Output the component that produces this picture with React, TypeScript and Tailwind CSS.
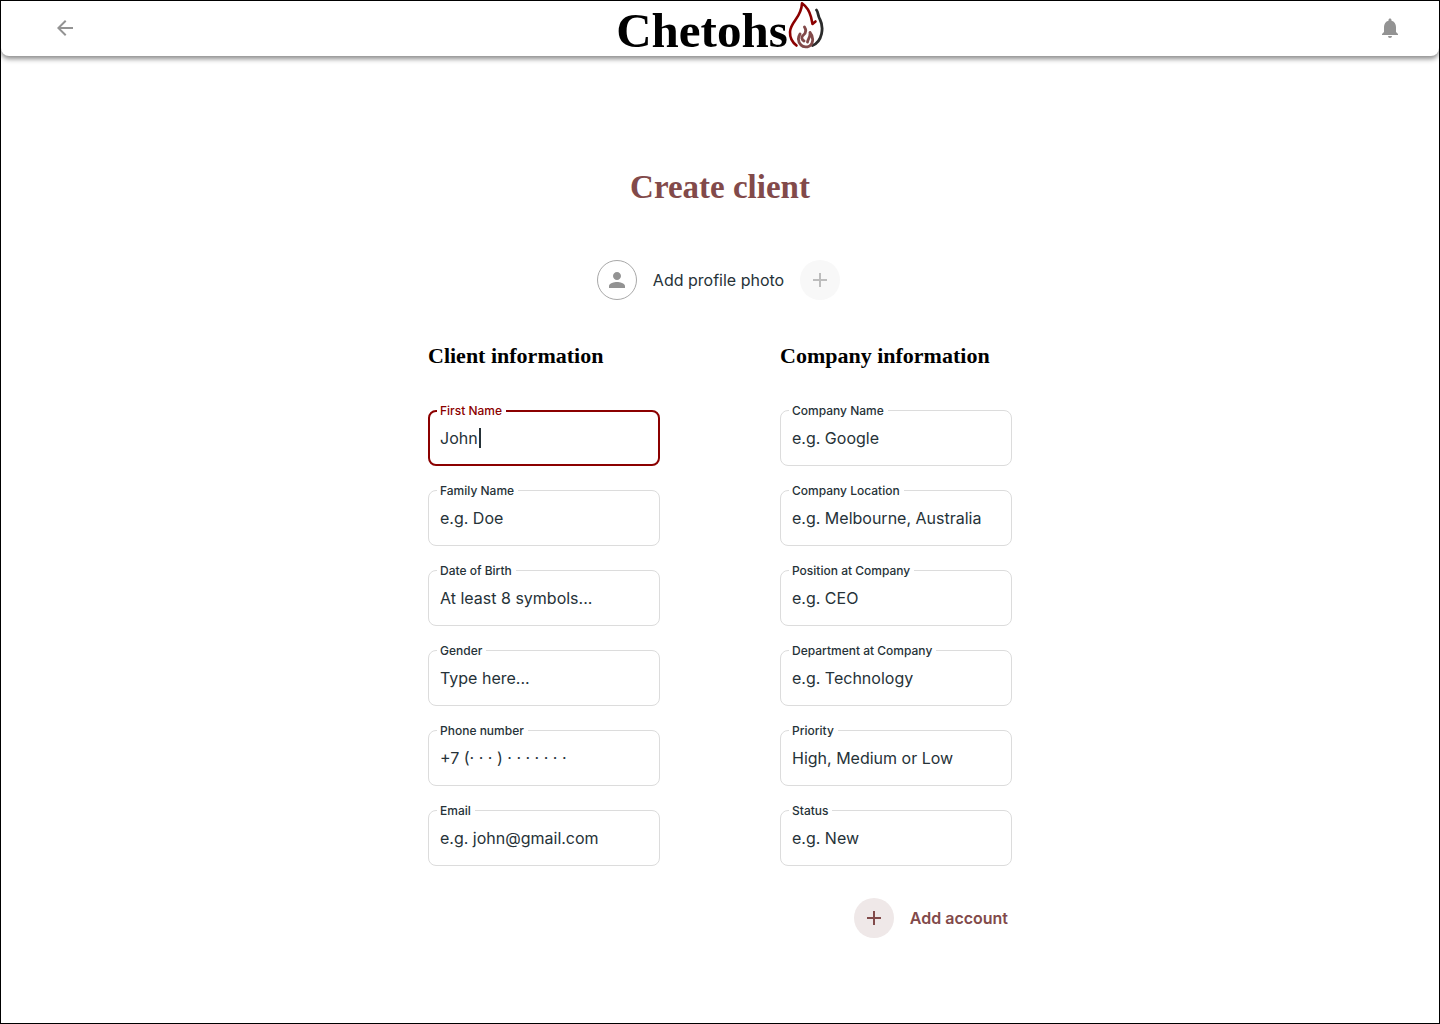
import { useState } from "react";
import { MdAdd, MdArrowBack, MdNotifications, MdPerson } from "react-icons/md";

type FieldProps = {
  id: string;
  label: string;
  placeholder: string;
  type?: string;
};

const clientFields: FieldProps[] = [
  { id: "family-name", label: "Family Name", placeholder: "e.g. Doe" },
  { id: "birth-date", label: "Date of Birth", placeholder: "At least 8 symbols..." },
  { id: "gender", label: "Gender", placeholder: "Type here..." },
  { id: "phone", label: "Phone number", placeholder: "+7 (· · · ) · · · · · · ·", type: "tel" },
  { id: "email", label: "Email", placeholder: "e.g. john@gmail.com", type: "email" },
];

const companyFields: FieldProps[] = [
  { id: "company-name", label: "Company Name", placeholder: "e.g. Google" },
  { id: "company-location", label: "Company Location", placeholder: "e.g. Melbourne, Australia" },
  { id: "position", label: "Position at Company", placeholder: "e.g. CEO" },
  { id: "department", label: "Department at Company", placeholder: "e.g. Technology" },
  { id: "priority", label: "Priority", placeholder: "High, Medium or Low" },
  { id: "status", label: "Status", placeholder: "e.g. New" },
];

function FlameLogo() {
  return (
    <svg viewBox="0 0 36 48" className="h-12 w-9" fill="none" strokeLinecap="round" strokeLinejoin="round" aria-hidden="true">
      <path
        d="M8.500 44.500C4 41 1.800 36.500 2 31C2.500 20.500 13.500 17 14 2.200C18.500 5.500 21.500 10 23 16L24.500 23L27.500 20.500"
        stroke="#8b0000"
        strokeWidth="2.600"
      />
      <path d="M28.500 9C30.500 11.500 29.500 14 32 18.500C36 26.500 34.500 40.500 24.500 44.500" stroke="#2b2b2b" strokeWidth="2.800" />
      <path
        d="M16.500 26C19 30 17.500 32.500 15 34.500C13 36.200 13.800 38.500 16 40M12 33C9.500 37 9.800 40.500 13 44M22 31.500C26.500 37 25 44.500 19.500 45.800C16.500 46.300 14 45.200 13 44M22 31.500C22.500 36.500 20 37.500 19.500 41"
        stroke="#824a4a"
        strokeWidth="2.800"
      />
    </svg>
  );
}

function Field({ id, label, placeholder, type = "text" }: FieldProps) {
  return (
    <div className="relative h-14 rounded-lg border border-[#dcdcdc]">
      <label htmlFor={id} className="absolute -top-2 left-2 bg-white pr-1 pl-[3px] text-xs leading-4 font-medium text-[#263238]">
        {label}
      </label>
      <input
        id={id}
        type={type}
        placeholder={placeholder}
        className="h-full w-full rounded-lg bg-transparent px-[11px] text-base text-[#263238] outline-none placeholder:text-[#263238]"
      />
    </div>
  );
}

function ActiveField() {
  const [name, setName] = useState("John");
  return (
    <div className="relative flex h-14 items-center rounded-lg border-2 border-[#8b0000] px-2.5">
      <label htmlFor="first-name" className="absolute -top-[9px] left-[7px] bg-white pr-1 pl-[3px] text-xs leading-4 font-medium text-[#8b0000]">
        First Name
      </label>
      <input
        id="first-name"
        value={name}
        onChange={(event) => setName(event.target.value)}
        className="field-sizing-content max-w-full bg-transparent text-base text-[#263238] caret-transparent outline-none"
      />
      <span className="ml-px h-5 w-0.5 bg-[#263238]" aria-hidden="true" />
    </div>
  );
}

export default function App() {
  return (
    <div className="flex min-h-screen flex-col border border-black bg-white font-['Inter',sans-serif] text-[#263238]">
      <header className="grid h-[55px] grid-cols-[1fr_auto_1fr] items-start rounded-b-lg bg-white shadow-[0_3px_5px_rgba(0,0,0,0.45)]">
        <button type="button" aria-label="Go back" className="mt-[15px] ml-13 justify-self-start text-[#939393]">
          <MdArrowBack size={24} />
        </button>
        <a href="#" className="flex items-start font-['Liberation_Serif',serif] text-[49px] leading-[60px] font-bold text-black">
          <span>Chetohs</span>
          <FlameLogo />
        </a>
        <button type="button" aria-label="Notifications" className="mt-[15px] mr-[37px] justify-self-end text-[#939393]">
          <MdNotifications size={24} />
        </button>
      </header>

      <main className="flex flex-col items-center px-6 pb-12">
        <h1 className="mt-[111px] font-['Liberation_Serif',serif] text-[33px] leading-10 font-bold text-[#824a4a]">Create client</h1>

        <div className="mt-[53px] mr-[3px] flex items-center">
          <span className="flex size-10 items-center justify-center rounded-full border border-[#a8a8a8] text-[#939393]">
            <MdPerson size={24} />
          </span>
          <label htmlFor="add-photo" className="mx-4 text-base">
            Add profile photo
          </label>
          <button id="add-photo" type="button" className="flex size-10 items-center justify-center rounded-full bg-[#f8f8f8] text-[#bdbdbd]">
            <MdAdd size={24} />
          </button>
        </div>

        <form className="mt-10 grid w-full max-w-[584px] grid-cols-2 gap-x-[120px]">
          <section>
            <h2 className="font-['Liberation_Serif',serif] text-[22px] leading-8 font-bold whitespace-nowrap text-black">Client information</h2>
            <div className="mt-[38px] flex flex-col gap-6">
              <ActiveField />
              {clientFields.map((field) => (
                <Field key={field.id} {...field} />
              ))}
            </div>
          </section>
          <section>
            <h2 className="font-['Liberation_Serif',serif] text-[22px] leading-8 font-bold whitespace-nowrap text-black">Company information</h2>
            <div className="mt-[38px] flex flex-col gap-6">
              {companyFields.map((field) => (
                <Field key={field.id} {...field} />
              ))}
            </div>
          </section>
          <button type="button" className="col-start-2 mt-8 mr-1 flex items-center gap-4 justify-self-end text-base font-semibold text-[#824a4a]">
            <span className="flex size-10 items-center justify-center rounded-full bg-[#efe8e8]">
              <MdAdd size={24} />
            </span>
            Add account
          </button>
        </form>
      </main>
    </div>
  );
}
